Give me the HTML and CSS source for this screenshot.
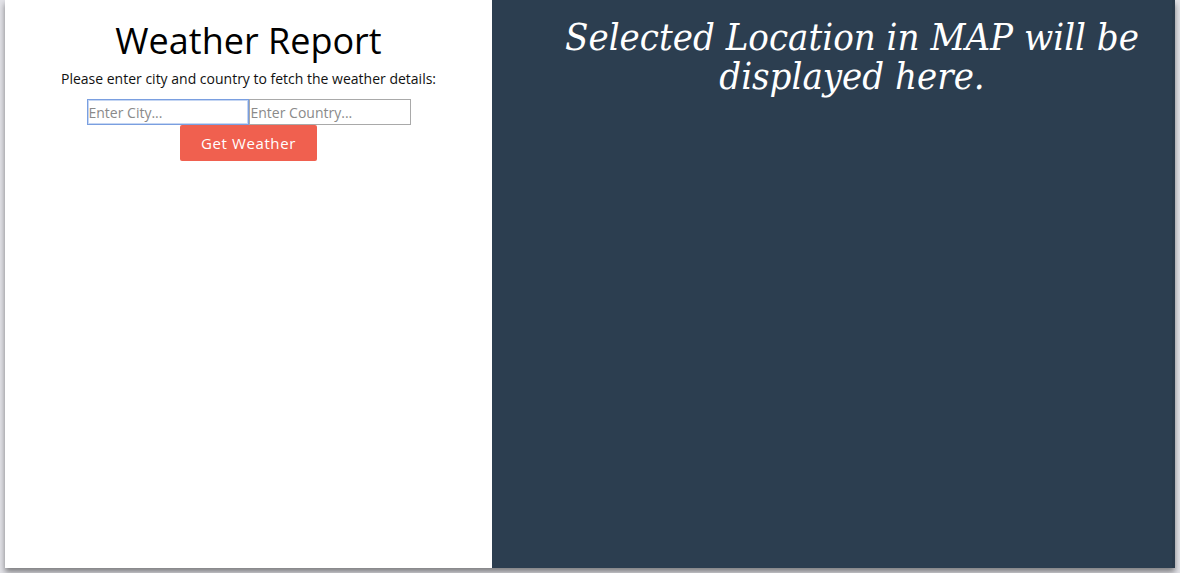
FILE: index.html
```html
<!DOCTYPE html>
<html lang="en">
<head>
<meta charset="utf-8">
<title>Weather Report</title>
<link rel="stylesheet" href="styles.css">
</head>
<body>
<div class="app">
  <section class="left">
    <h1 class="title">Weather Report</h1>
    <p class="subtitle">Please enter city and country to fetch the weather details:</p>
    <form class="form">
      <div class="inputs">
        <input class="field field-focus" type="text" placeholder="Enter City...">
        <input class="field" type="text" placeholder="Enter Country...">
      </div>
      <button class="btn" type="button">Get Weather</button>
    </form>
  </section>
  <section class="right">
    <h2 class="map-text">Selected Location in MAP will be displayed here.</h2>
  </section>
</div>
</body>
</html>
```
FILE: styles.css
```css
html, body {
  margin: 0;
  padding: 0;
  height: 100%;
}
body {
  background: #e3e3e8;
  font-family: "Open Sans", "Liberation Sans", sans-serif;
  overflow: hidden;
}
.app {
  margin: 0 5px;
  height: 568px;
  display: grid;
  grid-template-columns: 487px 1fr;
  box-shadow: 0 4px 6px rgba(0, 0, 0, 0.45);
}
.left {
  background: #ffffff;
  text-align: center;
  padding-top: 19px;
}
.title {
  margin: 0;
  font-weight: 400;
  font-size: 36px;
  line-height: 44px;
  color: #000;
}
.subtitle {
  margin: 6px 0 0;
  font-size: 14px;
  line-height: 20px;
  color: #111;
}
.form {
  margin-top: 10px;
  display: flex;
  flex-direction: column;
  align-items: center;
}
.inputs {
  display: flex;
}
.field {
  box-sizing: border-box;
  width: 162px;
  height: 26px;
  margin: 0;
  padding: 0 1px;
  border: 1px solid #a9a9a9;
  font-family: "Open Sans", sans-serif;
  font-size: 14px;
  color: #333;
  background: #fff;
  outline: none;
}
.field::placeholder {
  color: #8a8a8a;
}
.field-focus {
  border-color: #7a9fe0;
  box-shadow: inset 0 0 0 1px #c5d6f3;
}
.btn {
  width: 137px;
  height: 36px;
  border: none;
  border-radius: 2px;
  background: #f0604f;
  color: #fff;
  font-family: "Open Sans", sans-serif;
  font-size: 15px;
  letter-spacing: 0.6px;
  padding: 0;
}
.right {
  background: #2c3e50;
  border-right: 3px solid #2a3a4b;
  text-align: center;
  padding: 18px 10px 0 50px;
}
.map-text {
  margin: 0;
  color: #fff;
  font-family: "DejaVu Serif Condensed", "DejaVu Serif", serif;
  font-style: italic;
  font-weight: 400;
  font-size: 38px;
  line-height: 39px;
}
```
